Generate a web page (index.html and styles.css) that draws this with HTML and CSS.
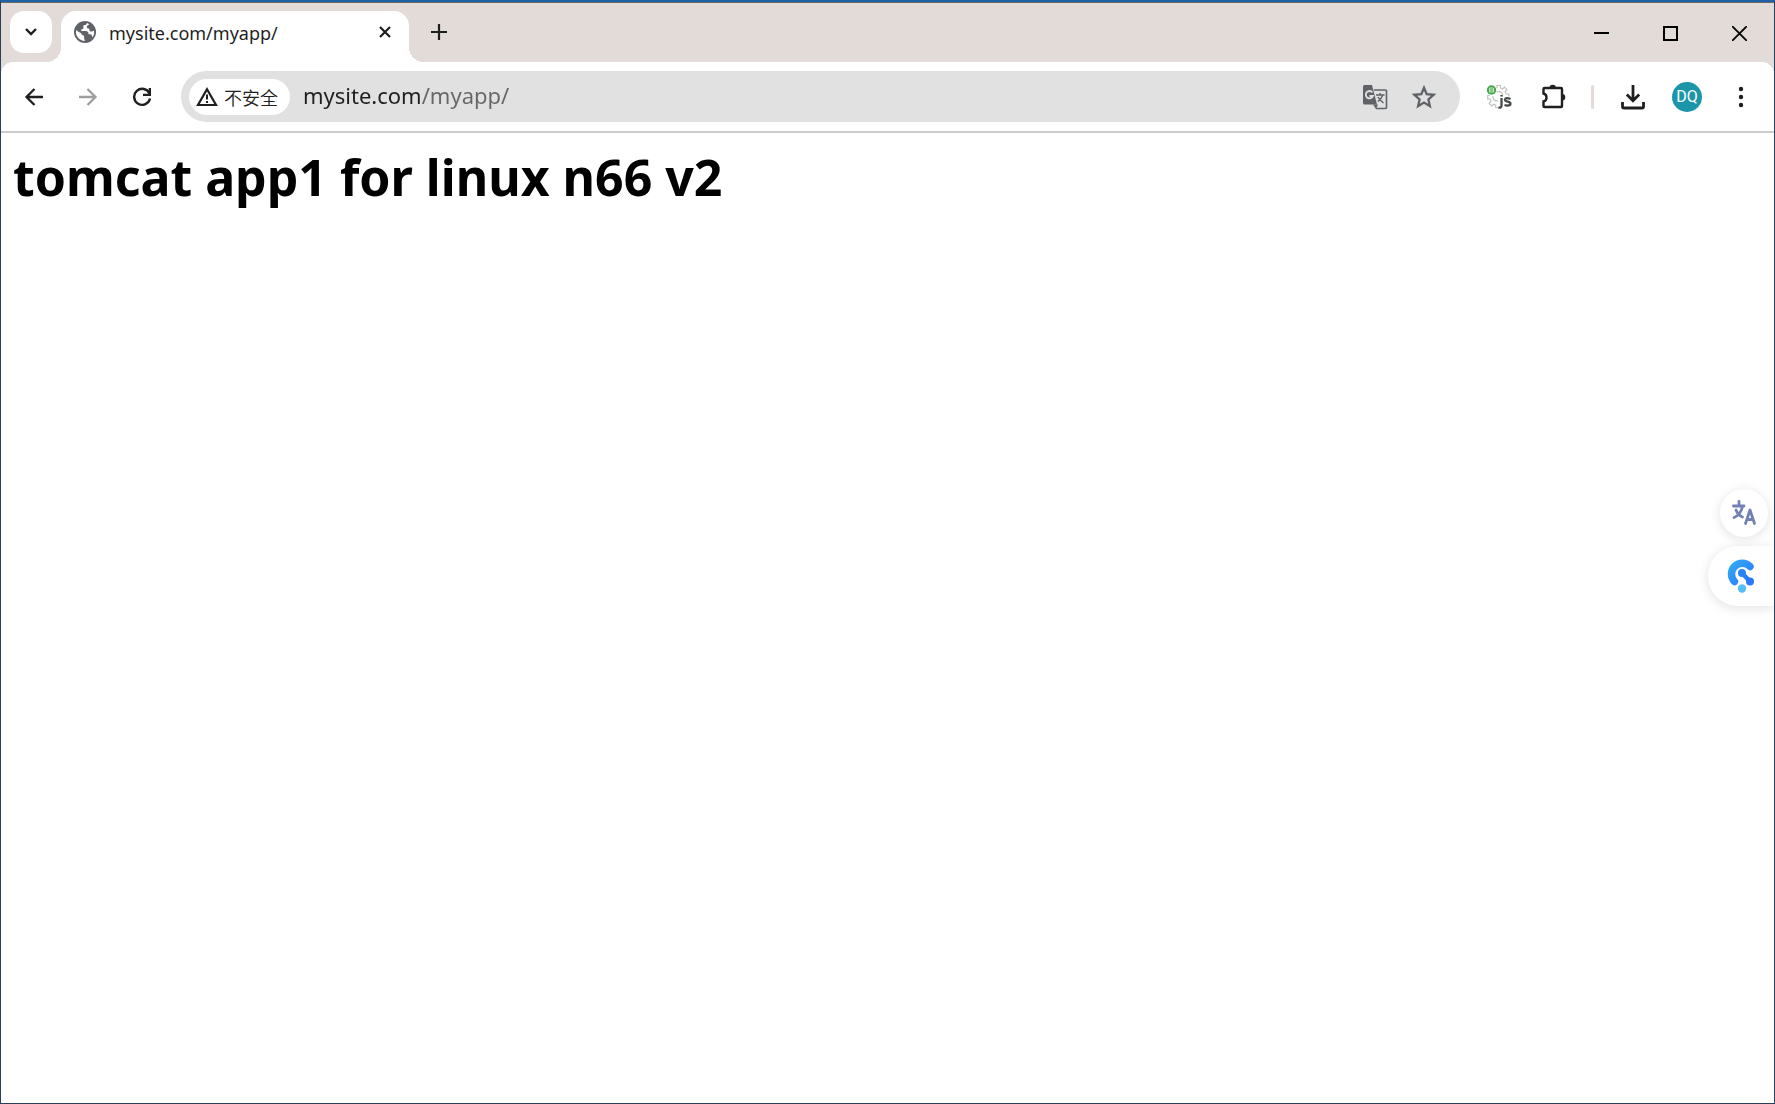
FILE: index.html
```html
<!DOCTYPE html>
<html lang="zh-CN">
<head>
<meta charset="utf-8">
<title>mysite.com/myapp/</title>
<link rel="stylesheet" href="styles.css">
</head>
<body>
<div class="window">
  <header class="tabstrip">
    <button class="tab-search" aria-label="搜索标签页">
      <svg width="14" height="10" viewBox="0 0 14 10"><path d="M2 2l5 5 5-5" fill="none" stroke="#1f1f1f" stroke-width="2.4"/></svg>
    </button>
    <div class="tab" role="tab" aria-selected="true">
      <svg width="22" height="22" viewBox="0 0 22 22"><circle cx="11" cy="11" r="11" fill="#5f6368"/><path d="M13 2c-.3 1.300-1 2-2.300 2.100-1.500.1-1.600 1.500-1.300 2.500.2.900-.3 1.300-1.200 1.400-1 .1-1 1-.9 2h4.600c1.600 0 2.600 1 2.600 2.600v.7h1.900c.9 0 1.200.5 1.400 1.300l.7 1.900A9 9 0 0 0 19.900 9.500c-.8 1-2 1.300-3.300 1-1.300-.4-1.500-1.500-1.200-2.700-1.300.1-2.400-.5-2.600-1.700C12.600 4.800 14 4 15.400 3.200zM2.200 9c1.400 1.200 3 2.300 4.600 3 .8.400.6 1.600 1.400 2 1 .400 2 .6 1.900 2-.1 1.500.3 2.700.9 4A9 9 0 0 1 2.200 9z" fill="#fff"/></svg>
      <span class="tab-title">mysite.com/myapp/</span>
      <button class="bare" aria-label="关闭标签页">
        <svg width="14" height="14" viewBox="0 0 14 14"><path d="M2 2l10 10M12 2L2 12" stroke="#1f1f1f" stroke-width="2.200"/></svg>
      </button>
    </div>
    <button class="bare new-tab" aria-label="打开新的标签页">
      <svg width="16" height="16" viewBox="0 0 16 16"><path d="M8 0v16M0 8h16" stroke="#1f1f1f" stroke-width="2.200"/></svg>
    </button>
    <div class="window-controls">
      <button class="bare" aria-label="最小化"><svg width="15" height="15" viewBox="0 0 15 15"><path d="M0 7h15" stroke="#000" stroke-width="2"/></svg></button>
      <button class="bare" aria-label="最大化"><svg width="15" height="15" viewBox="0 0 15 15"><path d="M1 1h13v13H1z" fill="none" stroke="#000" stroke-width="2"/></svg></button>
      <button class="bare" aria-label="关闭"><svg width="15" height="15" viewBox="0 0 15 15"><path d="M0 0l15 15M15 0L0 15" stroke="#000" stroke-width="1.800"/></svg></button>
    </div>
  </header>

  <nav class="toolbar">
    <div class="nav-buttons">
      <button class="bare" aria-label="后退"><svg width="20" height="20" viewBox="0 0 20 20"><path d="M19 10H3M10.500 2L2.500 10l8 8" fill="none" stroke="#1f1f1f" stroke-width="2.300"/></svg></button>
      <button class="bare" aria-label="前进" disabled><svg width="20" height="20" viewBox="0 0 20 20"><path d="M1 10h16M9.500 2l8 8-8 8" fill="none" stroke="#9e9e9e" stroke-width="2.300"/></svg></button>
      <button class="bare" aria-label="重新加载"><svg width="20" height="20" viewBox="0 0 20 20"><path d="M17.500 6.600A8 8 0 1 0 18 11.500" fill="none" stroke="#1f1f1f" stroke-width="2.400"/><path d="M19 1v8h-8V6.700h5.700V1z" fill="#1f1f1f"/></svg></button>
    </div>
    <div class="omnibox">
      <button class="chip">
        <svg width="22" height="20" viewBox="0 0 22 20"><path d="M11 2.300L20 18H2z" fill="none" stroke="#1f1f1f" stroke-width="2.200"/><path d="M11 7.500v5M11 14v2" stroke="#1f1f1f" stroke-width="2"/></svg>
        <span>不安全</span>
      </button>
      <input class="url" type="text" value="mysite.com/myapp/" aria-label="地址栏" spellcheck="false">
      <button class="bare" aria-label="翻译此页">
        <svg width="26" height="26" viewBox="0 0 26 26"><path d="M12 6h11.500q1 0 1 1v16.500q0 1-1 1H14" fill="none" stroke="#5f6368" stroke-width="1.600"/><path d="M2.500 1H10l5 19.500H2.500Q1 20.500 1 19V2.500Q1 1 2.500 1z" fill="#5f6368"/><path d="M11 20.500h5L14 25z" fill="#5f6368"/><path d="M10.500 8.500A3.700 3.700 0 1 0 11 12H7.500" fill="none" stroke="#e1e1e1" stroke-width="1.800"/><path d="M14 11h8.500M18 9v2M20.800 11c-1 3-3 5-5 6.500M16 13c1 2 3 4 5.500 6" fill="none" stroke="#5f6368" stroke-width="1.400"/></svg>
      </button>
      <button class="bare" aria-label="为此标签页添加书签">
        <svg width="24" height="24" viewBox="0 0 24 24"><path d="M12 2.800l2.700 6.400 6.900.6-5.200 4.600 1.500 6.800L12 17.600l-5.900 3.600 1.500-6.800-5.200-4.600 6.900-.6z" fill="none" stroke="#5f6368" stroke-width="2.300"/></svg>
      </button>
    </div>
    <div class="actions">
      <button class="bare" aria-label="JS 扩展程序">
        <svg width="28" height="26" viewBox="0 0 28 26"><path d="M11 4V1.500h3.500V4l2 1 2-1.800 2.500 2.500-1.800 2 1 2.300h2.500v2.500M4 11.500H1.700V15H4l1 2.500-1.800 2 2.500 2.500 2-1.800 2 1V23.500H13M10.500 8c4-1.500 7 1 6 4.500M7 12c-.5 3 1.500 5.300 5 5" fill="none" stroke="#bfc1c3" stroke-width="1.200"/><circle cx="5.500" cy="6" r="4.700" fill="#45a849"/><path d="M3.500 4h4v4h-4zM3.500 6h4" fill="none" stroke="#c4e6c4" stroke-width="1"/><path d="M15.500 14v7.500q0 2.500-3 2M15.500 11v1.500M24.500 15q-5-2-5.500.800c0 2.500 5.700 1.200 5.500 4-.5 3-6 1.200-6 1.200" fill="none" stroke="#45494c" stroke-width="2.300"/></svg>
      </button>
      <button class="bare" aria-label="扩展程序">
        <svg width="26" height="26" viewBox="0 0 26 26"><path d="M4.500 4H20q1 0 1 1v17q0 1-1 1H3.500q-1 0-1-1v-4.500q3-.7 3-4t-3-4V5q0-1 1-1z" fill="none" stroke="#1f1f1f" stroke-width="2.400"/><path d="M8.500 4a3.200 3.200 0 0 1 6.400 0zM21 10a3.300 3.300 0 0 1 0 6.600z" fill="#1f1f1f"/></svg>
      </button>
      <span class="divider"></span>
      <button class="bare" aria-label="下载内容">
        <svg width="24" height="26" viewBox="0 0 24 26"><path d="M12 1v15M5.800 10.500l6.200 6.300 6.200-6.300M1.500 18v4.500q0 1.500 1.500 1.500h18q1.500 0 1.500-1.500V18" fill="none" stroke="#1f1f1f" stroke-width="2.800"/></svg>
      </button>
      <button class="avatar" aria-label="个人资料">DQ</button>
      <button class="bare menu" aria-label="自定义及控制">
        <svg width="6" height="22" viewBox="0 0 6 22"><g fill="#1f1f1f"><circle cx="3" cy="3" r="2.200"/><circle cx="3" cy="11" r="2.200"/><circle cx="3" cy="19" r="2.200"/></g></svg>
      </button>
    </div>
  </nav>

  <main class="page">
    <h1>tomcat app1 for linux n66 v2</h1>
  </main>

  <aside class="floating">
    <button class="translate-bubble" aria-label="翻译">
      <svg width="26" height="26" viewBox="0 0 26 26"><g fill="none" stroke="#7280b4" stroke-width="2.800" stroke-linecap="round" stroke-linejoin="round"><path d="M2.500 6h10.500M8 1.500V6M11.500 6.500Q9.500 15 3 17.500M5 10q2 5 6.500 7"/><path d="M14.500 23.500L19 10l4.500 13.500M16 19.500h6"/></g></svg>
    </button>
    <button class="side-bubble" aria-label="侧边助手">
      <svg width="28" height="36" viewBox="0 0 28 36"><defs><linearGradient id="blue" x1="0" y1="0" x2="1" y2="1"><stop offset="0" stop-color="#32a9f5"/><stop offset="1" stop-color="#2b78fa"/></linearGradient></defs><path d="M23 8.500A10 10 0 0 0 7.500 23.500" fill="none" stroke="url(#blue)" stroke-width="7.400" stroke-linecap="round"/><path d="M15 15l7.500 8" stroke="#2b7dfa" stroke-width="4.500"/><circle cx="15" cy="15" r="4" fill="#2c83fa"/><circle cx="23" cy="23.500" r="4" fill="#2b78fa"/><circle cx="15" cy="30.500" r="4.200" fill="#57bdf6"/></svg>
    </button>
  </aside>
</div>
</body>
</html>
```

FILE: styles.css
```css
* { box-sizing: border-box; }

body {
  margin: 0;
  background: #fff;
  color: #1f1f1f;
  font-family: "Noto Sans", "Noto Sans CJK SC", sans-serif;
}

button {
  padding: 0;
  border: 0;
  color: inherit;
  font: inherit;
}

svg { display: block; flex: none; }

.window {
  display: flex;
  flex-direction: column;
  min-height: 100vh;
  border: 1px solid #2a3f5a;
  border-top: 2px solid #2062a6;
}

.bare {
  display: flex;
  align-items: center;
  justify-content: center;
  background: none;
}

/* Tab strip */
.tabstrip {
  display: flex;
  align-items: flex-start;
  height: 60px;
  padding: 8px 0 0 9px;
  border-top: 1px solid #6b6966;
  background: #e3dbd8;
}

.tab-search {
  display: flex;
  align-items: center;
  justify-content: center;
  width: 42px;
  height: 42px;
  border-radius: 14px;
  background: #fff;
}

.tab {
  position: relative;
  display: flex;
  align-items: center;
  width: 348px;
  height: 51px;
  margin-left: 9px;
  padding: 0 17px 9px 13px;
  border-radius: 15px 15px 0 0;
  background: #fff;
}

.tab::before,
.tab::after {
  content: "";
  position: absolute;
  bottom: 0;
  width: 15px;
  height: 15px;
}

.tab::before {
  right: 100%;
  background: radial-gradient(circle at 0 0, transparent 15px, #fff 15px);
}

.tab::after {
  left: 100%;
  background: radial-gradient(circle at 100% 0, transparent 15px, #fff 15px);
}

.tab-title {
  flex: 1;
  margin-left: 13px;
  padding-top: 2px;
  font-size: 18px;
  line-height: 26px;
}

.new-tab {
  width: 42px;
  height: 42px;
  margin-left: 9px;
}

.window-controls {
  display: flex;
  margin-left: auto;
}

.window-controls .bare {
  width: 69px;
  height: 45px;
}

/* Toolbar */
.toolbar {
  display: flex;
  align-items: center;
  height: 71px;
  padding: 0 21px 0 23px;
  border-bottom: 2px solid #ccc;
  background: radial-gradient(circle at 12px 12px, #fff 12px, #e3dbd8 12px) 0 0 / 12px 12px no-repeat,
    radial-gradient(circle at 0 12px, #fff 12px, #e3dbd8 12px) 100% 0 / 12px 12px no-repeat,
    #fff;
}

.nav-buttons {
  display: flex;
  gap: 34px;
}

.omnibox {
  display: flex;
  flex: 1;
  align-items: center;
  gap: 24px;
  height: 51px;
  margin-left: 29px;
  padding: 0 24px 0 8px;
  border-radius: 26px;
  background: #e1e1e1;
}

.chip {
  display: flex;
  align-items: center;
  gap: 6px;
  height: 36px;
  padding: 0 12px 0 7px;
  border-radius: 18px;
  background: #fff;
  font-family: "Noto Sans CJK SC", sans-serif;
  font-size: 18px;
  font-weight: 350;
}

.url {
  flex: 1;
  min-width: 0;
  height: 36px;
  margin-left: -11px;
  padding: 0 0 3px;
  border: 0;
  outline: 0;
  background: linear-gradient(90deg, #1f1f1f 117px, #666 117px) text;
  color: transparent;
  font-family: inherit;
  font-size: 22px;
}

.actions {
  display: flex;
  align-items: center;
  margin-left: 26px;
  gap: 27px;
}

.divider {
  width: 3px;
  height: 24px;
  margin-left: -3px;
  border-radius: 2px;
  background: #e3dbd8;
}

.avatar {
  width: 30px;
  height: 30px;
  border-radius: 50%;
  background: #1b96a9;
  color: #fff;
  font-family: Roboto, sans-serif;
  font-size: 16px;
  line-height: 30px;
}

.menu { width: 24px; }

/* Web page */
.page {
  flex: 1;
  padding: 8px 12px;
}

h1 {
  margin: 0;
  color: #000;
  font-size: 50px;
  line-height: 72px;
}

/* Widgets pinned over the page's right edge */
.floating {
  position: fixed;
  top: 489px;
  right: 1px;
  display: flex;
  flex-direction: column;
  align-items: flex-end;
  gap: 9px;
}

.floating button {
  display: flex;
  align-items: center;
  background: #fff;
  box-shadow: 0 2px 12px rgba(0, 0, 0, 0.12);
}

.translate-bubble {
  justify-content: center;
  width: 48px;
  height: 48px;
  margin-right: 6px;
  border-radius: 50%;
}

.side-bubble {
  width: 66px;
  height: 60px;
  padding-left: 19px;
  border-radius: 30px 0 0 30px;
  clip-path: inset(-20px 0 -20px -20px);
}
```
